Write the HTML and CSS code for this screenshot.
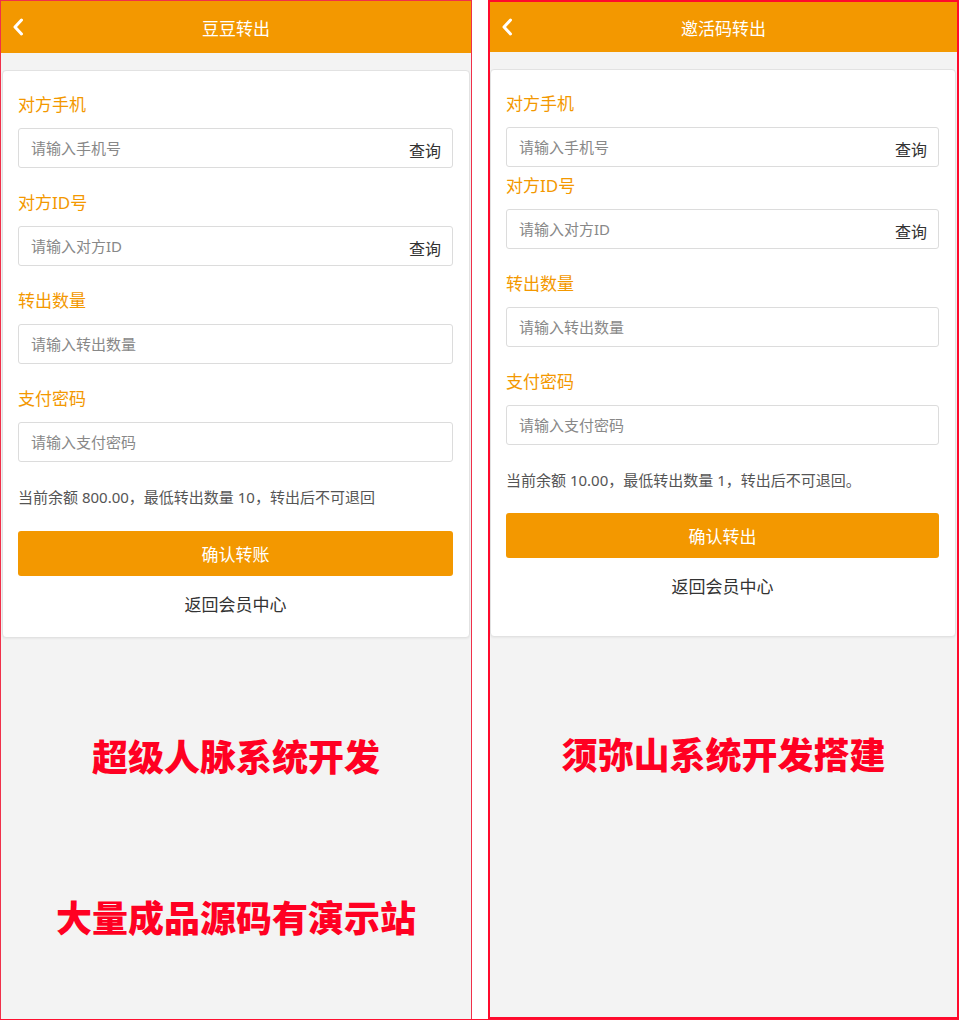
FILE: index.html
```html
<!DOCTYPE html>
<html lang="zh-CN">
  <head>
    <meta charset="UTF-8" />
    <meta name="viewport" content="width=device-width, initial-scale=1.0" />
    <title>转出页面</title>
    <link rel="stylesheet" href="styles.css">
  </head>
  <body>
    <div class="page">
      <!-- 左侧：豆豆转出 -->
      <div class="phone phone-left">
        <div class="header">
          <span class="back">
            <svg width="12" height="18" viewBox="0 0 12 18"><polyline points="9.5,2 3,9 9.5,16" fill="none" stroke="#fff" stroke-width="3" stroke-linecap="round" stroke-linejoin="round"/></svg>
          </span>
          <div class="title">豆豆转出</div>
          <span></span>
        </div>
        <div class="card">
          <div class="field">
            <div class="label">对方手机</div>
            <div class="input-box">
              <input class="input" type="text" placeholder="请输入手机号" />
              <span class="query">查询</span>
            </div>
          </div>
          <div class="field">
            <div class="label">对方ID号</div>
            <div class="input-box">
              <input class="input" type="text" placeholder="请输入对方ID" />
              <span class="query">查询</span>
            </div>
          </div>
          <div class="field">
            <div class="label">转出数量</div>
            <div class="input-box">
              <input class="input" type="text" placeholder="请输入转出数量" />
            </div>
          </div>
          <div class="field">
            <div class="label">支付密码</div>
            <div class="input-box">
              <input class="input" type="password" placeholder="请输入支付密码" />
            </div>
          </div>
          <p class="tip">当前余额 800.00，最低转出数量 10，转出后不可退回</p>
          <button class="btn">确认转账</button>
          <a class="back-link" href="#">返回会员中心</a>
        </div>
        <div class="promo">
          <p class="promo-text">超级人脉系统开发</p>
          <p class="promo-text promo-second">大量成品源码有演示站</p>
        </div>
      </div>

      <!-- 右侧：邀活码转出 -->
      <div class="phone phone-right">
        <div class="header">
          <span class="back">
            <svg width="12" height="18" viewBox="0 0 12 18"><polyline points="9.5,2 3,9 9.5,16" fill="none" stroke="#fff" stroke-width="3" stroke-linecap="round" stroke-linejoin="round"/></svg>
          </span>
          <div class="title">邀活码转出</div>
          <span></span>
        </div>
        <div class="card">
          <div class="field field-tight">
            <div class="label">对方手机</div>
            <div class="input-box">
              <input class="input" type="text" placeholder="请输入手机号" />
              <span class="query">查询</span>
            </div>
          </div>
          <div class="field">
            <div class="label">对方ID号</div>
            <div class="input-box">
              <input class="input" type="text" placeholder="请输入对方ID" />
              <span class="query">查询</span>
            </div>
          </div>
          <div class="field">
            <div class="label">转出数量</div>
            <div class="input-box">
              <input class="input" type="text" placeholder="请输入转出数量" />
            </div>
          </div>
          <div class="field">
            <div class="label">支付密码</div>
            <div class="input-box">
              <input class="input" type="password" placeholder="请输入支付密码" />
            </div>
          </div>
          <p class="tip">当前余额 10.00，最低转出数量 1，转出后不可退回。</p>
          <button class="btn">确认转出</button>
          <a class="back-link" href="#">返回会员中心</a>
        </div>
        <div class="promo">
          <p class="promo-text">须弥山系统开发搭建</p>
        </div>
      </div>
    </div>
  </body>
</html>
```

FILE: styles.css
```css
/* 页面基础样式 */
body {
  margin: 0;
  padding: 0;
  background-color: #fff;
  font-family: "Noto Sans", "Noto Sans CJK SC", sans-serif;
  color: #333;
}

/* 两个手机截图并排 */
.page {
  display: flex;
  gap: 16px;
  height: 1020px;
  box-sizing: border-box;
  border-bottom: 1px solid #ff1030;
}

.phone {
  display: flex;
  flex-direction: column;
  background-color: #f3f3f3;
  box-sizing: border-box;
}

.phone-left {
  width: 472px;
  border: 1px solid #f0304a;
  border-bottom: none;
}

.phone-right {
  width: 471px;
  border: 2px solid #ff0a2c;
}

/* 顶部标题栏 */
.header {
  display: grid;
  grid-template-columns: 40px 1fr 40px;
  align-items: center;
  height: 52px;
  background-color: #f39800;
  color: #fff;
}

.phone-right .header {
  height: 50px;
}

.back {
  display: flex;
  align-items: center;
  padding-left: 11px;
}

.title {
  text-align: center;
  font-size: 17px;
}

/* 白色表单卡片 */
.card {
  display: flex;
  flex-direction: column;
  margin: 17px 1px 0 1px;
  padding: 22px 16px 20px 15px;
  background-color: #fff;
  border: 1px solid #e2e2e2;
  border-radius: 4px;
  box-shadow: 0 1px 2px rgba(0, 0, 0, 0.05);
}

.phone-right .card {
  margin: 17px 1px 0 0;
  padding-bottom: 37px;
}

.field {
  margin-bottom: 23px;
}

.field-tight {
  margin-bottom: 7px;
}

.label {
  font-size: 17px;
  line-height: 24px;
  color: #f39800;
  margin-bottom: 11px;
}

/* 输入框 */
.input-box {
  display: flex;
  align-items: center;
  height: 40px;
  padding: 0 11px 0 12px;
  box-sizing: border-box;
  border: 1px solid #dcdcdc;
  border-radius: 3px;
}

.input {
  flex: 1;
  min-width: 0;
  border: none;
  outline: none;
  padding: 0;
  background: transparent;
  font-family: inherit;
  font-size: 15px;
  color: #333;
}

.input::placeholder {
  color: #888;
}

.query {
  font-size: 16px;
  color: #333;
  margin-top: 4px;
}

/* 余额提示 */
.tip {
  margin: 0;
  font-size: 15px;
  line-height: 24px;
  color: #555;
}

/* 确认按钮 */
.btn {
  margin-top: 22px;
  height: 45px;
  border: none;
  border-radius: 3px;
  background-color: #f39800;
  color: #fff;
  font-family: inherit;
  font-size: 17px;
  cursor: pointer;
}

.phone-right .btn {
  margin-top: 21px;
}

.back-link {
  margin-top: 17px;
  text-align: center;
  font-size: 17px;
  line-height: 24px;
  color: #333;
  text-decoration: none;
}

/* 底部红色宣传文字 */
.promo {
  padding-top: 97px;
}

.phone-right .promo {
  padding-top: 96px;
}

.promo-text {
  margin: 0;
  text-align: center;
  font-family: "Noto Sans CJK SC", sans-serif;
  font-size: 36px;
  line-height: 40px;
  font-weight: 900;
  color: #ff0022;
}

.promo-second {
  margin-top: 121px;
}
```
